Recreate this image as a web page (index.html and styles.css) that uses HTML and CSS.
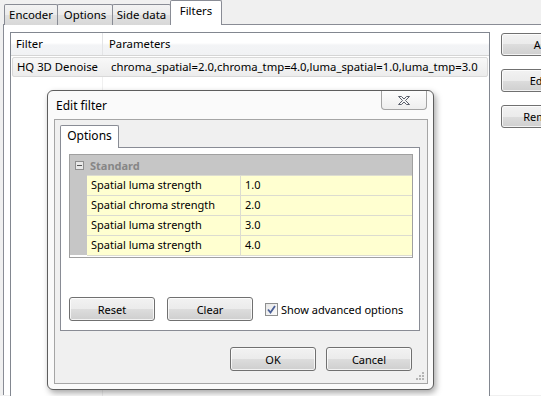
FILE: index.html
```html
<!DOCTYPE html>
<html lang="en">
<head>
  <meta charset="UTF-8" />
  <title>Filters - Encoder settings</title>
  <link rel="stylesheet" href="styles.css">
</head>
<body>

  <div class="window">
    <div class="tabbar">
      <div class="tab tab-encoder">Encoder</div>
      <div class="tab tab-options">Options</div>
      <div class="tab tab-side">Side data</div>
      <div class="tab tab-filters active">Filters</div>
    </div>

    <div class="pane">
      <div class="filter-list">
        <div class="list-head">
          <div class="cell col-name">Filter</div>
          <div class="cell col-params">Parameters</div>
        </div>
        <div class="list-row">
          <div class="cell col-name">HQ 3D Denoise</div>
          <div class="cell col-params">chroma_spatial=2.0,chroma_tmp=4.0,luma_spatial=1.0,luma_tmp=3.0</div>
        </div>
        <div class="list-body">
          <div class="col-line"></div>
        </div>
      </div>

      <div class="side-buttons">
        <button class="btn side-btn">Add</button>
        <button class="btn side-btn">Edit...</button>
        <button class="btn side-btn">Remove</button>
      </div>
    </div>
  </div>

  <!-- modal dialog floating over the main window -->
  <div class="dialog">
    <div class="titlebar">
      <span class="title">Edit filter</span>
      <div class="close-btn">
        <svg width="14" height="11" viewBox="0 0 14 11">
          <path d="M1.5 1.5 H4.5 L7 4 L9.5 1.5 H12.5 L8.5 5.5 L12.5 9.5 H9.5 L7 7 L4.5 9.5 H1.5 L5.5 5.5 Z"
                fill="#f4f4f4" stroke="#5a5f6b" stroke-width="1" stroke-linejoin="round" />
        </svg>
      </div>
    </div>

    <div class="client">
      <div class="dlg-tabs">
        <div class="dlg-tab">Options</div>
      </div>

      <div class="dlg-pane">
        <div class="grid">
          <div class="grid-group">
            <span class="collapse"></span>
            <span class="group-label">Standard</span>
          </div>
          <div class="grid-row">
            <div class="grid-name">Spatial luma strength</div>
            <div class="grid-value">1.0</div>
          </div>
          <div class="grid-row">
            <div class="grid-name">Spatial chroma strength</div>
            <div class="grid-value">2.0</div>
          </div>
          <div class="grid-row">
            <div class="grid-name">Spatial luma strength</div>
            <div class="grid-value">3.0</div>
          </div>
          <div class="grid-row last">
            <div class="grid-name">Spatial luma strength</div>
            <div class="grid-value">4.0</div>
          </div>
        </div>

        <div class="pane-actions">
          <button class="btn">Reset</button>
          <button class="btn">Clear</button>
          <label class="check">
            <span class="checkbox">
              <svg width="9" height="9" viewBox="0 0 9 9">
                <path d="M1 4.5 L3.5 7.5 L8 1" fill="none" stroke="#4a5f97" stroke-width="1.8" />
              </svg>
            </span>
            Show advanced options
          </label>
        </div>
      </div>

      <div class="dlg-actions">
        <button class="btn">OK</button>
        <button class="btn">Cancel</button>
      </div>

      <svg class="grip" width="9" height="9" viewBox="0 0 9 9">
        <g fill="#b5b5b5">
          <rect x="7" y="1" width="2" height="2" />
          <rect x="4" y="4" width="2" height="2" />
          <rect x="7" y="4" width="2" height="2" />
          <rect x="1" y="7" width="2" height="2" />
          <rect x="4" y="7" width="2" height="2" />
          <rect x="7" y="7" width="2" height="2" />
        </g>
      </svg>
    </div>
  </div>

</body>
</html>
```

FILE: styles.css
```css
* {
  box-sizing: border-box;
}

body {
  margin: 0;
  width: 541px;
  height: 396px;
  overflow: hidden;
  background: #f0f0f0;
  font-family: 'Segoe UI', 'Noto Sans', sans-serif;
  font-size: 11px;
  color: #000;
  position: relative;
}

/* ---------- main window ---------- */

.window {
  height: 396px;
  overflow: hidden;
}

.tabbar {
  display: flex;
  align-items: flex-end;
  height: 25px;
  padding-left: 4px;
  position: relative;
  z-index: 1;
}

.tab {
  height: 21px;
  margin-left: -1px;
  border: 1px solid #898c95;
  border-bottom: none;
  border-radius: 2px 2px 0 0;
  background: linear-gradient(#f3f3f3, #ebebeb 50%, #e0e0e0 50%, #d8d8d8);
  text-align: center;
  line-height: 19px;
  font-size: 11.4px;
}

.tab:first-child {
  margin-left: 0;
}

.tab-encoder { width: 54px; }
.tab-options { width: 56px; }
.tab-side    { width: 59px; }

.tab-filters {
  width: 52px;
  height: 25px;
  line-height: 20px;
  background: #fff;
}

.pane {
  display: flex;
  align-items: flex-start;
  margin-left: 3px;
  height: 371px;
  border-left: 1px solid #898c95;
  border-top: 1px solid #898c95;
  margin-top: -1px;
  background: #fff;
  padding: 7px 0 0 6px;
}

.filter-list {
  width: 480px;
  height: 400px;
  flex: none;
  border: 1px solid #828790;
  background: #fff;
  font-size: 11.3px;
}

.list-head {
  display: flex;
  height: 23px;
  border-bottom: 1px solid #d5d5d5;
  background: linear-gradient(#fff 45%, #f3f4f6 55%, #f1f2f4);
}

.list-head .cell {
  line-height: 22px;
}

.list-head .col-name {
  border-right: 1px solid #e3e4e6;
}

.cell {
  white-space: nowrap;
  overflow: hidden;
}

.col-name {
  width: 92px;
  padding-left: 5px;
}

.col-params {
  flex: 1;
  padding-left: 6px;
}

.list-row {
  display: flex;
  height: 20px;
  margin: 1px 1px 0 1px;
  border: 1px solid #d9d9d9;
  border-radius: 2px;
  background: linear-gradient(#f8f8f8, #ececec);
  line-height: 18px;
}

.list-row .col-name {
  width: 91px;
  padding-left: 4px;
}

.list-row .col-params {
  padding-left: 7px;
}

.list-body {
  height: 320px;
}

.col-line {
  width: 92px;
  height: 100%;
  border-right: 1px solid #f0f0f0;
}

.side-buttons {
  display: flex;
  flex-direction: column;
  gap: 13px;
  margin: 1px 0 0 11px;
}

.btn {
  font: inherit;
  color: #000;
  width: 86px;
  height: 24px;
  padding: 0;
  border: 1px solid #707070;
  border-radius: 3px;
  background: linear-gradient(#f2f2f2, #ebebeb 50%, #dddddd 50%, #cfcfcf);
  box-shadow: inset 0 0 0 1px rgba(255, 255, 255, 0.75);
  white-space: nowrap;
}

.side-btn {
  height: 23px;
  flex: none;
}

/* ---------- dialog ---------- */

.dialog {
  position: absolute;
  left: 47px;
  top: 90px;
  width: 387px;
  height: 300px;
  border: 1px solid #5d5d5d;
  border-radius: 6px;
  background: #fafafa;
  box-shadow: 2px 3px 6px rgba(0, 0, 0, 0.35);
  padding: 0 5px 5px 6px;
  display: flex;
  flex-direction: column;
}

.titlebar {
  height: 28px;
  display: flex;
  align-items: center;
  justify-content: space-between;
  padding-left: 2px;
  padding-top: 1px;
}

.title {
  font-size: 12px;
}

.close-btn {
  align-self: flex-start;
  width: 46px;
  height: 19px;
  margin-top: -1px;
  margin-right: 1px;
  border: 1px solid #a3a3a3;
  border-top: none;
  border-radius: 0 0 4px 4px;
  background: linear-gradient(#fdfdfd, #eeeeee);
  display: flex;
  align-items: center;
  justify-content: center;
}

.client {
  flex: 1;
  border: 1px solid #a5a5a5;
  background: #f0f0f0;
  padding: 5px 7px 0 5px;
  position: relative;
}

.dlg-tabs {
  display: flex;
  height: 23px;
}

.dlg-tab {
  width: 59px;
  height: 23px;
  border: 1px solid #898c95;
  border-bottom: none;
  border-radius: 2px 2px 0 0;
  background: #fff;
  text-align: center;
  line-height: 20px;
  font-size: 12px;
  position: relative;
  z-index: 1;
}

.dlg-pane {
  height: 184px;
  margin-top: -1px;
  border: 1px solid #898c95;
  background: #fff;
  padding: 6px 6px 0 8px;
}

.grid {
  height: 104px;
  border: 1px solid #a0a0a0;
  background: #fff;
}

.grid-group {
  display: flex;
  align-items: center;
  height: 20px;
  background: #c6c6c6;
  padding-left: 5px;
}

.collapse {
  width: 9px;
  height: 9px;
  border: 1px solid #8f8f8f;
  background: #e8e8e8;
  position: relative;
  margin-right: 6px;
}

.collapse::after {
  content: '';
  position: absolute;
  left: 1px;
  top: 3px;
  width: 5px;
  height: 1px;
  background: #555;
}

.group-label {
  font-weight: bold;
  color: #868686;
}

.grid-row {
  display: flex;
  height: 20px;
  border-left: 17px solid #c6c6c6;
}

.grid-name,
.grid-value {
  border-top: 1px solid #dcdcd0;
  background: #ffffd0;
  line-height: 18px;
  white-space: nowrap;
}

.grid-row.last .grid-name,
.grid-row.last .grid-value {
  height: 21px;
  border-bottom: 1px solid #dcdcd0;
}

.grid-name {
  width: 154px;
  padding-left: 4px;
  border-right: 1px solid #dcdcd0;
}

.grid-value {
  flex: 1;
  padding-left: 4px;
}

.pane-actions {
  display: flex;
  align-items: center;
  margin-top: 39px;
}

.pane-actions .btn + .btn {
  margin-left: 12px;
}

.check {
  display: flex;
  align-items: center;
  margin-left: 12px;
  white-space: nowrap;
}

.checkbox {
  flex: none;
  width: 13px;
  height: 13px;
  margin-right: 3px;
  border: 1px solid #8e8f8f;
  background: linear-gradient(135deg, #e6e6e6, #fbfbfb);
  display: flex;
  align-items: center;
  justify-content: center;
}

.dlg-actions {
  display: flex;
  justify-content: flex-end;
  gap: 10px;
  margin-top: 16px;
  padding-right: 8px;
}

.grip {
  position: absolute;
  right: 3px;
  bottom: 3px;
}
```
